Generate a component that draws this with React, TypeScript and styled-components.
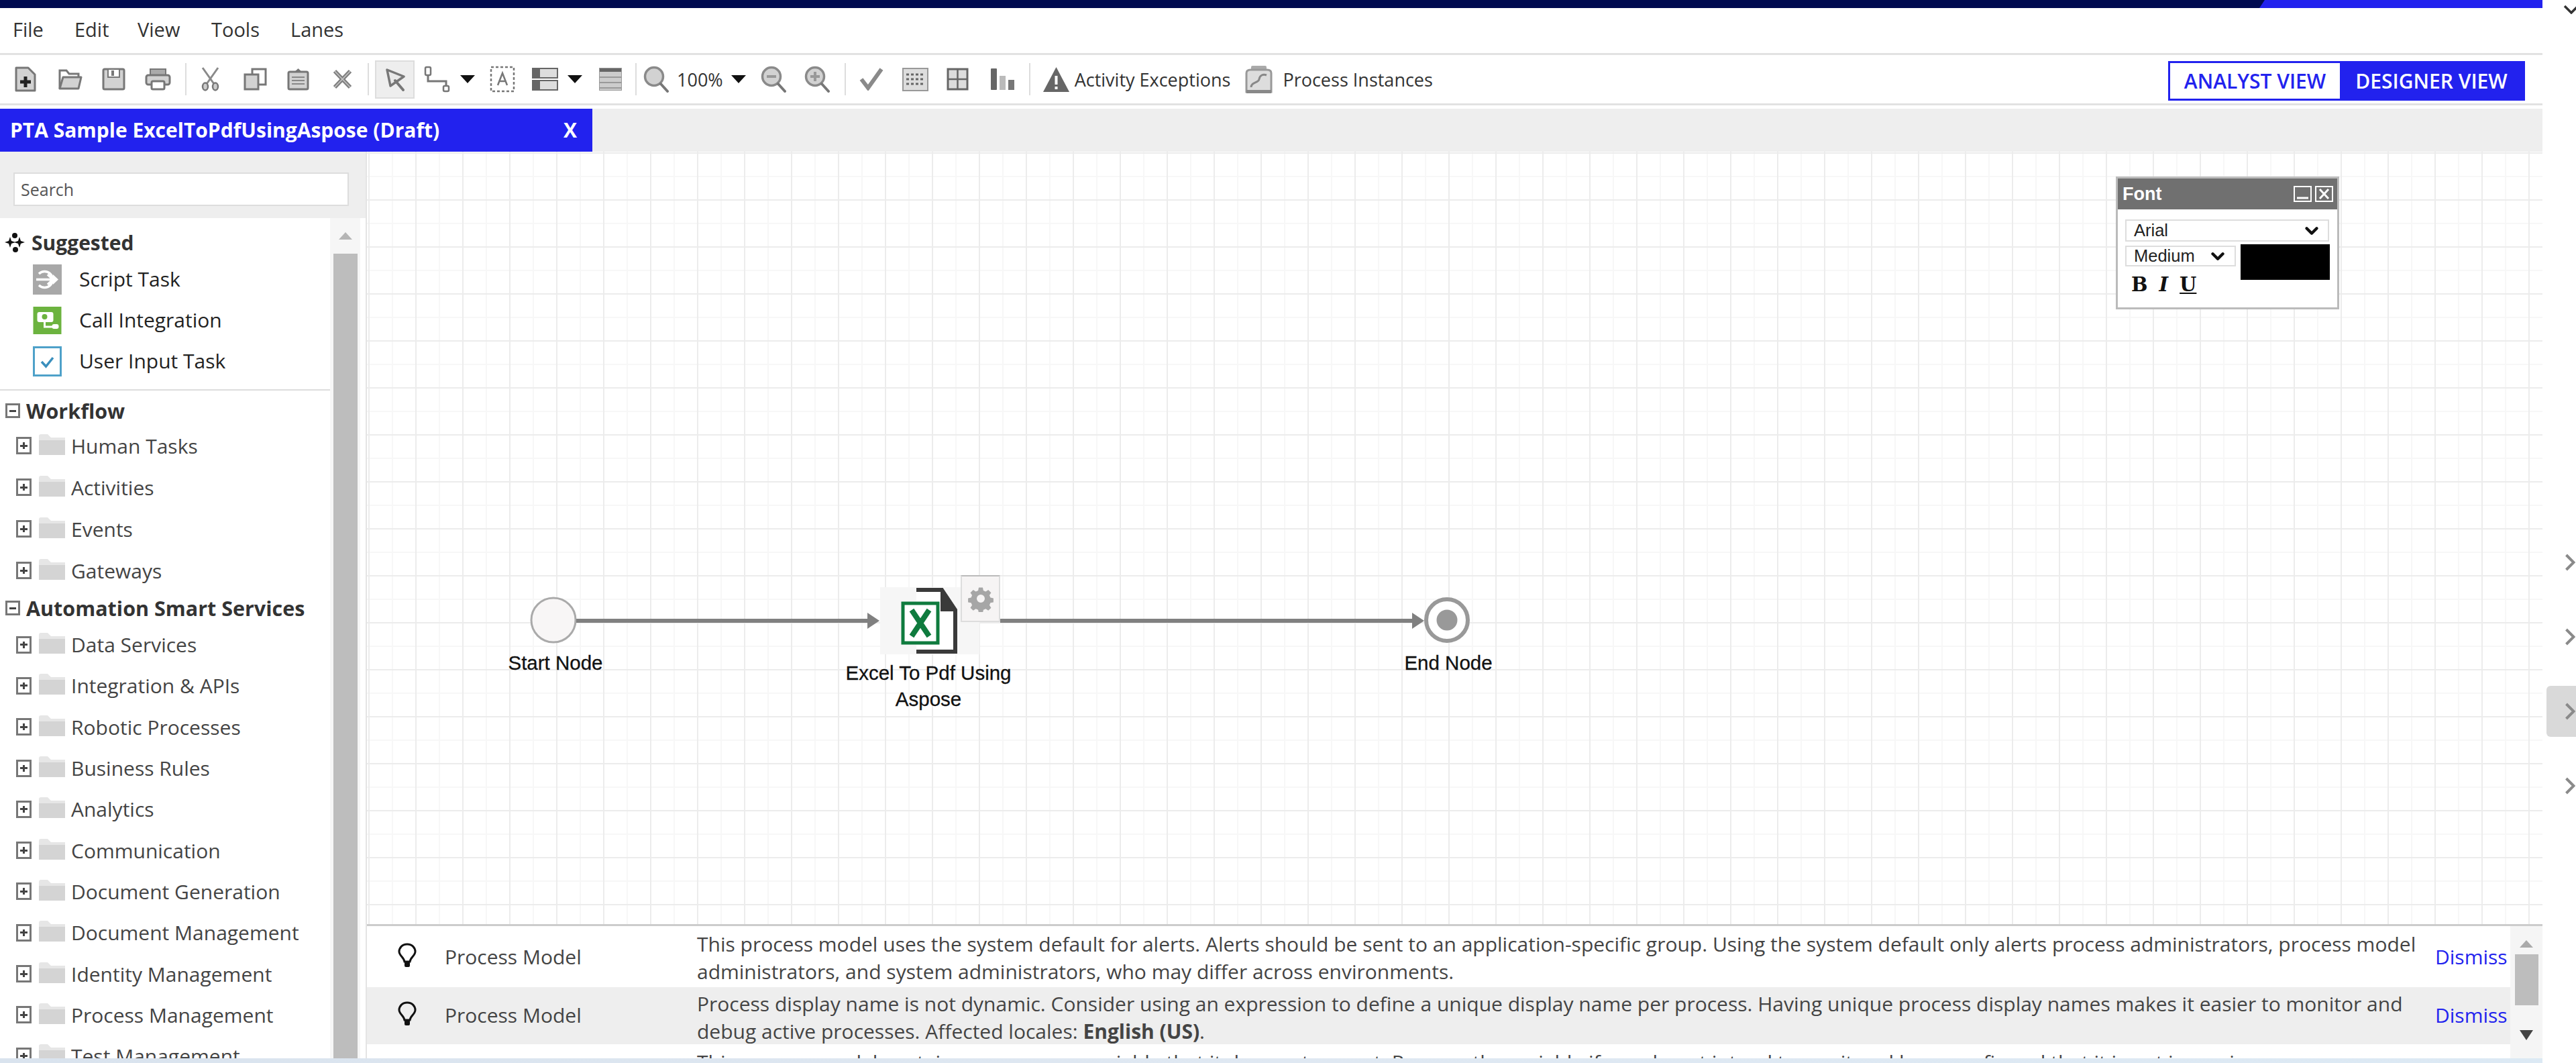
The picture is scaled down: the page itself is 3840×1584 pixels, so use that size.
import React from "react";
import styled, { createGlobalStyle } from "styled-components";
import { ChevronDown } from "lucide-react";

const BLUE = "#2222ee";
const NAVY = "#000a50";
const ICON_LINE = "#777";
const ICON_FILL = "#d2d2d2";

const GlobalStyle = createGlobalStyle`
  html, body {
    margin: 0;
    padding: 0;
    background: #fff;
  }
  body {
    font-family: "Open Sans", "Liberation Sans", sans-serif;
    color: #333;
  }
  * {
    box-sizing: border-box;
  }
`;

const NewIcon = () => (
  <svg width="32" height="38" viewBox="0 0 32 38">
    <path d="M2 2H20L30 12V36H2Z" fill={ICON_FILL} stroke={ICON_LINE} strokeWidth="3" strokeLinejoin="round" />
    <path d="M16 15V31M8 23H24" stroke="#222" strokeWidth="5" />
  </svg>
);

const FolderIcon = () => (
  <svg width="37" height="32" viewBox="0 0 37 32">
    <path d="M3 30V3H13L17 8H31V13" fill="none" stroke={ICON_LINE} strokeWidth="3" />
    <path d="M3 30L8 13H35L31 30Z" fill={ICON_FILL} stroke={ICON_LINE} strokeWidth="3" strokeLinejoin="round" />
  </svg>
);

const SaveIcon = () => (
  <svg width="35" height="34" viewBox="0 0 35 34">
    <rect x="2" y="2" width="31" height="30" rx="2" fill={ICON_FILL} stroke={ICON_LINE} strokeWidth="3" />
    <rect x="9" y="2" width="17" height="12" fill="#fff" stroke={ICON_LINE} strokeWidth="2" />
    <rect x="14" y="4" width="4" height="8" fill={ICON_LINE} />
  </svg>
);

const PrintIcon = () => (
  <svg width="39" height="34" viewBox="0 0 39 34">
    <rect x="8" y="2" width="23" height="9" fill="#aaa" stroke={ICON_LINE} strokeWidth="2" />
    <rect x="2" y="11" width="35" height="14" rx="3" fill={ICON_FILL} stroke={ICON_LINE} strokeWidth="3" />
    <rect x="10" y="20" width="19" height="12" rx="2" fill="#fff" stroke={ICON_LINE} strokeWidth="3" />
  </svg>
);

const CutIcon = () => (
  <svg width="29" height="36" viewBox="0 0 29 36">
    <path d="M3 1L20 25M26 1L9 25" stroke="#8a8a8a" strokeWidth="3" fill="none" />
    <ellipse cx="7" cy="29" rx="4" ry="5.5" fill="#ccc" stroke={ICON_LINE} strokeWidth="2.5" />
    <ellipse cx="22" cy="29" rx="4" ry="5.5" fill="#ccc" stroke={ICON_LINE} strokeWidth="2.5" />
  </svg>
);

const CopyIcon = () => (
  <svg width="35" height="34" viewBox="0 0 35 34">
    <rect x="13" y="2" width="20" height="23" fill="#fff" stroke={ICON_LINE} strokeWidth="3" />
    <rect x="2" y="10" width="20" height="22" fill={ICON_FILL} stroke={ICON_LINE} strokeWidth="3" />
  </svg>
);

const PasteIcon = () => (
  <svg width="33" height="34" viewBox="0 0 33 34">
    <rect x="2" y="6" width="29" height="26" rx="2" fill={ICON_FILL} stroke={ICON_LINE} strokeWidth="3" />
    <path d="M10 7L16.5 1L23 7Z" fill={ICON_LINE} />
    <path d="M7 14H26M7 19H26M7 24H26" stroke="#888" strokeWidth="2" />
  </svg>
);

const DeleteIcon = () => (
  <svg width="31" height="32" viewBox="0 0 31 32">
    <path d="M4 4L27 28M27 4L4 28" stroke="#808080" strokeWidth="6" />
    <path d="M4 4L27 28M27 4L4 28" stroke="#c4c4c4" strokeWidth="1.5" />
  </svg>
);

const PointerIcon = () => (
  <svg width="30" height="36" viewBox="0 0 30 36">
    <path d="M3 4L28 14L8 28Z" fill="#e8e8e8" stroke={ICON_LINE} strokeWidth="3.500" strokeLinejoin="round" />
    <path d="M15 20L27 34" stroke={ICON_LINE} strokeWidth="4" strokeLinecap="round" />
  </svg>
);

const ConnectorIcon = () => (
  <svg width="39" height="40" viewBox="0 0 39 40">
    <rect x="2" y="2" width="8" height="12" rx="2" fill="#fff" stroke={ICON_LINE} strokeWidth="2.5" />
    <path d="M6 14V23H33V30" fill="none" stroke={ICON_LINE} strokeWidth="3" />
    <rect x="29" y="30" width="8" height="8" rx="2" fill="#fff" stroke={ICON_LINE} strokeWidth="2.5" />
  </svg>
);

const TextBoxIcon = () => (
  <svg width="38" height="40" viewBox="0 0 38 40">
    <rect x="2" y="2" width="34" height="36" fill="#fff" stroke={ICON_LINE} strokeWidth="2.5" strokeDasharray="4 3" />
    <path d="M12 29L19 11L26 29M14.5 23H23.5" fill="none" stroke={ICON_LINE} strokeWidth="2.5" />
  </svg>
);

const LanesIcon = () => (
  <svg width="39" height="34" viewBox="0 0 39 34">
    <rect x="1" y="1" width="37" height="14" fill="#ddd" stroke="#666" strokeWidth="2" />
    <rect x="1" y="19" width="37" height="14" fill="#ddd" stroke="#666" strokeWidth="2" />
    <rect x="1" y="1" width="11" height="14" fill="#666" />
    <rect x="1" y="19" width="11" height="14" fill="#666" />
  </svg>
);

const RowsIcon = () => (
  <svg width="34" height="34" viewBox="0 0 34 34">
    <rect x="0" y="0" width="34" height="34" fill="#ccc" />
    <rect x="0" y="0" width="34" height="6" fill="#666" />
    <path d="M0 14H34M0 22H34M0 30H34" stroke="#999" strokeWidth="2" />
    <rect x="0" y="0" width="34" height="34" fill="none" stroke="#999" strokeWidth="2" />
  </svg>
);

const MagnifierIcon = ({ mark }: { mark?: "plus" | "minus" }) => (
  <svg width="39" height="40" viewBox="0 0 39 40">
    <circle cx="16" cy="16" r="13.5" fill={ICON_FILL} stroke="#8a8a8a" strokeWidth="3.5" />
    <path d="M26 27L36 38" stroke={ICON_LINE} strokeWidth="4" strokeLinecap="round" />
    {mark && <path d="M9 16H23" stroke="#999" strokeWidth="4" />}
    {mark === "plus" && <path d="M16 9V23" stroke="#999" strokeWidth="4" />}
  </svg>
);

const CheckIcon = () => (
  <svg width="36" height="34" viewBox="0 0 36 34">
    <path d="M3 17L13 30L33 2" fill="none" stroke="#8a8a8a" strokeWidth="6" />
  </svg>
);

const DenseGridIcon = () => (
  <svg width="39" height="35" viewBox="0 0 39 35">
    <rect x="1" y="1" width="37" height="33" fill="#ddd" stroke="#999" strokeWidth="2" />
    <path d="M6 10H33M6 17H33M6 24H33" stroke="#666" strokeWidth="3" strokeDasharray="4 3" />
  </svg>
);

const GridIcon = () => (
  <svg width="33" height="34" viewBox="0 0 33 34">
    <rect x="2" y="2" width="29" height="30" fill="#ddd" stroke="#666" strokeWidth="3" />
    <path d="M16.5 2V32M2 17H31" stroke="#666" strokeWidth="2.5" />
  </svg>
);

const BarsIcon = () => (
  <svg width="35" height="32" viewBox="0 0 35 32">
    <rect x="0" y="0" width="9" height="32" rx="1" fill="#666" />
    <rect x="13" y="11" width="9" height="21" fill="#bbb" />
    <rect x="26" y="17" width="9" height="15" fill="#777" />
  </svg>
);

const WarningIcon = () => (
  <svg width="41" height="39" viewBox="0 0 41 39">
    <path d="M20.5 1L40 38H1Z" fill="#666" />
    <rect x="18.5" y="14" width="4" height="13" fill="#fff" />
    <rect x="18.5" y="30" width="4" height="4" fill="#fff" />
  </svg>
);

const InstancesIcon = () => (
  <svg width="41" height="43" viewBox="0 0 41 43">
    <rect x="9" y="1" width="23" height="8" rx="2" fill="#aaa" />
    <path d="M2 12Q2 7 8 7H33Q39 7 39 12V40H2Z" fill="#ddd" stroke="#999" strokeWidth="3" />
    <path d="M9 33C9 25 20 27 21 21S27 13 32 15" fill="none" stroke="#888" strokeWidth="3" />
    <rect x="2" y="37" width="37" height="5" fill="#888" />
  </svg>
);

const SparkIcon = () => (
  <svg width="30" height="31" viewBox="0 0 30 31">
    <path d="M8 7L10 13L16 15L10 17L8 23L6 17L0 15L6 13Z" fill="#111" />
    <path d="M22 7L24 13L30 15L24 17L22 23L20 17L14 15L20 13Z" fill="#111" />
    <circle cx="15" cy="5" r="4" fill="#111" />
    <circle cx="16" cy="26" r="4" fill="#111" />
  </svg>
);

const ScriptTaskIcon = () => (
  <svg width="43" height="45" viewBox="0 0 43 45">
    <rect width="43" height="45" fill="#a8a8a8" />
    <path d="M9 14A12 12 0 1 1 9 31" fill="none" stroke="#fff" strokeWidth="3.5" />
    <path d="M5 22.5H28M22 15L30 22.5L22 30" fill="none" stroke="#fff" strokeWidth="3.5" />
    <path d="M30 15L38 22.5L30 30Z" fill="#fff" />
  </svg>
);

const IntegrationIcon = () => (
  <svg width="42" height="41" viewBox="0 0 42 41">
    <rect width="42" height="41" fill="#6cb33f" />
    <rect x="6" y="8" width="24" height="15" rx="3" fill="#fff" />
    <circle cx="17" cy="15" r="4" fill="#6cb33f" />
    <path d="M17 20V30H30" fill="none" stroke="#fff" strokeWidth="3" />
    <rect x="28" y="26" width="10" height="7" rx="3" fill="#fff" />
  </svg>
);

const UserTaskIcon = () => (
  <svg width="43" height="45" viewBox="0 0 43 45">
    <rect x="1.5" y="1.5" width="40" height="42" fill="#fff" stroke="#4ea1c9" strokeWidth="3" />
    <path d="M13 23L19.5 30L30 17" fill="none" stroke="#3a8fbd" strokeWidth="3.5" />
  </svg>
);

const BulbIcon = () => (
  <svg width="30" height="37" viewBox="0 0 30 37">
    <path d="M15 2C7 2 3 8 3 13C3 19 10 21 11 28H19C20 21 27 19 27 13C27 8 23 2 15 2Z" fill="none" stroke="#111" strokeWidth="3" />
    <rect x="11" y="28" width="8" height="8" rx="2" fill="#111" />
  </svg>
);

const GrayFolder = () => (
  <svg width="39" height="31" viewBox="0 0 39 31">
    <path d="M0 3Q0 0 3 0H13L18 5H39V9H0Z" fill="#e6e6e6" />
    <rect x="0" y="9" width="39" height="22" fill="#d4d4d4" />
  </svg>
);

const ExcelIcon = () => (
  <svg width="100" height="100" viewBox="0 0 100 100">
    <path d="M30 4H68L88 34V96H30" fill="#fff" stroke="#3a3a3a" strokeWidth="6" />
    <path d="M66 3L90 36H66Z" fill="#3a3a3a" />
    <rect x="10" y="24" width="52" height="59" fill="#fff" stroke="#0f7b3e" strokeWidth="5" />
    <path d="M23 34L49 73M49 34L23 73" stroke="#0f7b3e" strokeWidth="8" />
  </svg>
);

const GearIcon = () => (
  <svg width="40" height="40" viewBox="0 0 24 24">
    <path
      d="M10 1h4l.6 3 2.3 1 2.6-1.700 2.800 2.800-1.700 2.600 1 2.300 3 .6v4l-3 .6-1 2.300 1.700 2.600-2.800 2.800-2.600-1.700-2.300 1-.6 3h-4l-.6-3-2.300-1-2.600 1.700-2.800-2.800 1.700-2.600-1-2.300-3-.6v-4l3-.6 1-2.300-1.700-2.600 2.800-2.800 2.600 1.700 2.300-1zM12 8a4 4 0 1 0 0 8a4 4 0 0 0 0-8z"
      fill="#a6a6a6"
      fillRule="evenodd"
      transform="translate(1.200 1.200) scale(.9)"
    />
  </svg>
);

const SmallMinimize = () => (
  <svg width="27" height="24" viewBox="0 0 27 24">
    <rect x="1" y="1" width="25" height="22" fill="none" stroke="#fff" strokeWidth="2" />
    <path d="M5 18H22" stroke="#fff" strokeWidth="3" />
  </svg>
);

const SmallClose = () => (
  <svg width="27" height="24" viewBox="0 0 27 24">
    <rect x="1" y="1" width="25" height="22" fill="none" stroke="#fff" strokeWidth="2" />
    <path d="M7 5L20 19M20 5L7 19" stroke="#fff" strokeWidth="3" />
  </svg>
);

const RailChevron = () => (
  <svg width="16" height="26" viewBox="0 0 16 26">
    <path d="M2.500 2L13.500 13L2.500 24" fill="none" stroke="#8a8a8a" strokeWidth="4" />
  </svg>
);

const CornerChevron = () => (
  <svg width="24" height="14" viewBox="0 0 24 14">
    <path d="M2 2L12 12L22 2" fill="none" stroke="#333" strokeWidth="3.500" />
  </svg>
);

const TriangleDown = styled.span`
  display: block;
  width: 0;
  height: 0;
  border-left: 11.5px solid transparent;
  border-right: 11.5px solid transparent;
  border-top: 12px solid #111;
`;

const Tool = styled.div<{ $ml: number }>`
  display: flex;
  align-items: center;
  flex-shrink: 0;
  margin-left: ${(props) => props.$ml}px;
  svg {
    display: block;
    filter: blur(0.5px);
  }
`;

const Separator = styled.div<{ $ml: number }>`
  width: 2px;
  height: 48px;
  flex-shrink: 0;
  margin-left: ${(props) => props.$ml}px;
  background: #ddd;
`;

const SelectedTool = styled(Tool)`
  width: 59px;
  height: 57px;
  justify-content: center;
  background: #eee;
  border: 2px solid #ddd;
`;

const ToolLabel = styled.span<{ $ml: number }>`
  margin-left: ${(props) => props.$ml}px;
  font-size: 27px;
  white-space: nowrap;
  color: #333;
`;

const Page = styled.div`
  display: flex;
  width: 3840px;
  height: 1584px;
  overflow: hidden;
`;

const MainColumn = styled.div`
  display: flex;
  flex-direction: column;
  width: 3790px;
  height: 100%;
`;

const TopBar = styled.div`
  display: flex;
  justify-content: flex-end;
  height: 12px;
  flex-shrink: 0;
  background: ${NAVY};
`;

const TopBarAccent = styled.div`
  width: 422px;
  background: ${BLUE};
  clip-path: polygon(8px 0, 100% 0, 100% 100%, 0 100%);
`;

const MenuBar = styled.nav`
  display: flex;
  align-items: center;
  height: 70px;
  flex-shrink: 0;
  padding-left: 19px;
  border-bottom: 3px solid #e2e2e2;
`;

const MenuItem = styled.span<{ $w: number }>`
  width: ${(props) => props.$w}px;
  font-size: 29px;
  color: #333;
  margin-top: -5px;
`;

const Toolbar = styled.div`
  display: flex;
  align-items: center;
  height: 75px;
  flex-shrink: 0;
  padding-right: 26px;
  border-bottom: 3px solid #e2e2e2;
`;

const ViewSwitch = styled.div`
  display: flex;
  margin-left: auto;
  margin-top: 5px;
  height: 59px;
  border: 3px solid ${BLUE};
`;

const ViewButton = styled.div<{ $active?: boolean; $w: number }>`
  display: flex;
  align-items: center;
  justify-content: center;
  width: ${(props) => props.$w}px;
  font-size: 30px;
  font-weight: 600;
  white-space: nowrap;
  color: ${(props) => (props.$active ? "#fff" : BLUE)};
  background: ${(props) => (props.$active ? BLUE : "#fff")};
`;

const TabRow = styled.div`
  display: flex;
  height: 64px;
  flex-shrink: 0;
  margin-top: 5px;
  background: #eee;
`;

const Tab = styled.div`
  display: flex;
  align-items: center;
  justify-content: space-between;
  width: 883px;
  padding: 0 23px 2px 15px;
  background: ${BLUE};
  color: #fff;
  font-size: 30px;
  font-weight: 700;
  white-space: nowrap;
`;

const Workspace = styled.div`
  display: flex;
  flex: 1;
  min-height: 0;
`;

const Sidebar = styled.aside`
  display: flex;
  flex-direction: column;
  width: 547px;
  flex-shrink: 0;
  border-right: 2px solid #e4e4e4;
`;

const SearchArea = styled.div`
  height: 99px;
  flex-shrink: 0;
  padding: 31px 25px 0 20px;
  background: #eee;
`;

const SearchBox = styled.div`
  display: flex;
  align-items: center;
  height: 50px;
  padding-left: 9px;
  background: #fff;
  border: 2px solid #ddd;
  color: #555;
  font-size: 25px;
`;

const PaletteWrap = styled.div`
  display: flex;
  flex: 1;
  min-height: 0;
`;

const Palette = styled.div`
  width: 492px;
  flex-shrink: 0;
  overflow: hidden;
`;

const SuggestedHead = styled.div`
  display: flex;
  align-items: center;
  gap: 10px;
  height: 61px;
  padding: 12px 0 0 7px;
  font-size: 30px;
  font-weight: 700;
  color: #333;
`;

const SuggestedList = styled.div`
  padding: 0 0 11px 49px;
  border-bottom: 2px solid #ddd;
`;

const SuggestedItem = styled.div`
  display: flex;
  align-items: center;
  height: 61px;
  padding-bottom: 3px;
  font-size: 30px;
  color: #222;
  svg {
    width: 43px;
    flex-shrink: 0;
    margin: 3px 26px 0 0;
  }
`;

const SectionHead = styled.div<{ $mt: number }>`
  display: flex;
  align-items: center;
  gap: 9px;
  height: 40px;
  margin-top: ${(props) => props.$mt}px;
  padding-left: 8px;
  font-size: 30.500px;
  font-weight: 700;
  color: #333;
  white-space: nowrap;
`;

const TreeBox = styled.span<{ $w: number; $h: number }>`
  position: relative;
  display: block;
  flex-shrink: 0;
  width: ${(props) => props.$w}px;
  height: ${(props) => props.$h}px;
  border: 3px solid #777;
  background: #fff;
  &::before {
    content: "";
    position: absolute;
    left: 3px;
    right: 3px;
    top: 50%;
    height: 3px;
    margin-top: -1.500px;
    background: #444;
  }
`;

const PlusBox = styled(TreeBox)`
  &::after {
    content: "";
    position: absolute;
    top: 5px;
    bottom: 5px;
    left: 50%;
    width: 3px;
    margin-left: -1.500px;
    background: #444;
  }
`;

const TreeGroup = styled.div<{ $mt: number }>`
  margin-top: ${(props) => props.$mt}px;
`;

const TreeRow = styled.div<{ $h: number }>`
  display: flex;
  align-items: center;
  height: ${(props) => props.$h}px;
  padding-left: 24px;
  font-size: 30px;
  color: #444;
  white-space: nowrap;
  svg {
    display: block;
    flex-shrink: 0;
    margin: -4px 9px 0 11px;
  }
`;

const Scrollbar = styled.div`
  display: flex;
  flex-direction: column;
  align-items: center;
  width: 45px;
  flex-shrink: 0;
  background: #f6f6f6;
`;

const ArrowUp = styled.span<{ $color: string }>`
  display: block;
  width: 0;
  height: 0;
  flex-shrink: 0;
  border-left: 10px solid transparent;
  border-right: 10px solid transparent;
  border-bottom: 11px solid ${(props) => props.$color};
`;

const ArrowDown = styled.span`
  display: block;
  width: 0;
  height: 0;
  flex-shrink: 0;
  border-left: 10px solid transparent;
  border-right: 10px solid transparent;
  border-top: 15px solid #444;
`;

const SidebarArrowBox = styled.div`
  display: flex;
  align-items: center;
  justify-content: center;
  height: 53px;
  flex-shrink: 0;
`;

const SidebarThumb = styled.div`
  width: 36px;
  flex: 1;
  background: #bdbdbd;
`;

const CanvasColumn = styled.div`
  display: flex;
  flex-direction: column;
  flex: 1;
  min-width: 0;
`;

const Canvas = styled.div`
  position: relative;
  flex: 1;
  min-height: 0;
  overflow: hidden;
  background-color: #fff;
  background-image:
    linear-gradient(to right, #ececec 0, #ececec 2px, transparent 2px),
    linear-gradient(to bottom, #ececec 0, #ececec 2px, transparent 2px),
    linear-gradient(to right, #f7f7f7 0, #f7f7f7 2px, transparent 2px),
    linear-gradient(to bottom, #f7f7f7 0, #f7f7f7 2px, transparent 2px);
  background-size: 70px 70px, 70px 70px, 35px 35px, 35px 35px;
  background-position: 2px 1px;
`;

const DiagramLines = styled.svg`
  position: absolute;
  left: 0;
  top: 0;
`;

const NodeLabel = styled.div<{ $x: number; $y: number }>`
  position: absolute;
  left: ${(props) => props.$x}px;
  top: ${(props) => props.$y}px;
  width: 300px;
  margin-left: -150px;
  font-family: "Liberation Sans", Arial, sans-serif;
  font-size: 29.500px;
  line-height: 39px;
  text-align: center;
  color: #111;
  -webkit-text-stroke: 0.3px #111;
`;

const TaskTile = styled.div`
  position: absolute;
  left: 765px;
  top: 649px;
  display: flex;
  align-items: center;
  justify-content: center;
  width: 148px;
  height: 100px;
  background: #f6f6f6;
`;

const GearTile = styled.div`
  position: absolute;
  left: 885px;
  top: 631px;
  display: flex;
  align-items: center;
  justify-content: center;
  width: 59px;
  height: 70px;
  background: #f6f4f4;
  border: 2px solid #ddd;
  border-top-color: #bbb;
`;

const FontPanel = styled.div`
  position: absolute;
  left: 2607px;
  top: 37px;
  width: 333px;
  height: 198px;
  background: #fff;
  border: 3px solid #bbb;
  font-family: "Liberation Sans", Arial, sans-serif;
`;

const FontHeader = styled.div`
  display: flex;
  align-items: center;
  gap: 5px;
  height: 46px;
  padding: 0 6px 0 7px;
  background: #707070;
  color: #fff;
  font-size: 27px;
  font-weight: 700;
  span {
    margin-right: auto;
  }
`;

const FontBody = styled.div`
  display: grid;
  grid-template-columns: 165px 133px;
  grid-template-rows: 33px 6px 31px auto;
  column-gap: 7px;
  padding: 15px 0 0 11px;
`;

const FontSelect = styled.div<{ $wide?: boolean }>`
  display: flex;
  align-items: center;
  justify-content: space-between;
  grid-column: ${(props) => (props.$wide ? "1 / 3" : "1")};
  grid-row: ${(props) => (props.$wide ? "1" : "3")};
  padding: 0 ${(props) => (props.$wide ? 9 : 10)}px 0 11px;
  border: 2px solid #ddd;
  font-size: 25.500px;
  color: #222;
  width: ${(props) => (props.$wide ? "304px" : "auto")};
`;

const ColorSwatch = styled.div`
  grid-column: 2;
  grid-row: 2 / 5;
  height: 53px;
  margin-top: 4px;
  background: #000;
`;

const StyleButtons = styled.div`
  grid-column: 1;
  grid-row: 4;
  display: flex;
  gap: 17px;
  padding: 9px 0 0 9px;
  font-family: "DejaVu Serif", "Liberation Serif", serif;
  font-size: 29px;
  font-weight: 700;
  line-height: 36px;
  color: #111;
  b:nth-child(2) {
    font-style: italic;
  }
  b:nth-child(3) {
    text-decoration: underline;
  }
`;

const AlertPanel = styled.div`
  display: flex;
  height: 200px;
  flex-shrink: 0;
  border-top: 3px solid #ccc;
`;

const AlertList = styled.div`
  flex: 1;
  min-width: 0;
  overflow: hidden;
`;

const AlertRow = styled.div<{ $shaded?: boolean; $h: number; $pt: number }>`
  display: flex;
  align-items: flex-start;
  height: ${(props) => props.$h}px;
  padding-top: ${(props) => props.$pt}px;
  background: ${(props) => (props.$shaded ? "#eee" : "#fff")};
  font-size: 30px;
  color: #444;
  white-space: nowrap;
`;

const AlertSide = styled.div`
  display: flex;
  align-items: center;
  align-self: center;
  width: 492px;
  flex-shrink: 0;
  padding-left: 45px;
  margin-top: -6px;
  svg {
    flex-shrink: 0;
    margin: -4px 41px 0 0;
  }
`;

const AlertText = styled.div`
  width: 2591px;
  flex-shrink: 0;
  line-height: 41px;
  b {
    font-weight: 700;
  }
`;

const Dismiss = styled.span`
  align-self: center;
  margin-top: -6px;
  color: ${BLUE};
`;

const AlertScroll = styled.div`
  display: flex;
  flex-direction: column;
  align-items: center;
  width: 48px;
  flex-shrink: 0;
  background: #f5f5f5;
  padding-top: 21px;
`;

const AlertThumb = styled.div`
  width: 35px;
  height: 76px;
  margin: 10px 0 37px;
  background: #bdbdbd;
`;

const TaskStrip = styled.div`
  height: 7px;
  flex-shrink: 0;
  background: linear-gradient(to right, #d9e3ee, #dfe8f2 50%, #dce9f4);
`;

const RightRail = styled.div`
  display: flex;
  flex-direction: column;
  align-items: flex-end;
  flex: 1;
`;

const TopChevron = styled.div`
  display: flex;
  justify-content: flex-end;
  width: 100%;
  height: 28px;
  padding-top: 7px;
  margin-bottom: 772px;
  svg {
    flex-shrink: 0;
    margin-right: -5px;
  }
`;

const RailButton = styled.div<{ $active?: boolean }>`
  display: flex;
  align-items: center;
  justify-content: flex-end;
  width: 44px;
  height: 76px;
  margin-bottom: 35px;
  padding-right: 1px;
  background: ${(props) => (props.$active ? "#d9d9d9" : "transparent")};
  border-radius: 6px 0 0 6px;
`;

const workflowItems = ["Human Tasks", "Activities", "Events", "Gateways"];

const smartServiceItems = [
  "Data Services",
  "Integration & APIs",
  "Robotic Processes",
  "Business Rules",
  "Analytics",
  "Communication",
  "Document Generation",
  "Document Management",
  "Identity Management",
  "Process Management",
  "Test Management",
];

function App(): React.ReactElement {
  return (
    <Page>
      <GlobalStyle />
      <MainColumn>
        <TopBar>
          <TopBarAccent />
        </TopBar>
        <MenuBar>
          <MenuItem $w={92}>File</MenuItem>
          <MenuItem $w={94}>Edit</MenuItem>
          <MenuItem $w={110}>View</MenuItem>
          <MenuItem $w={118}>Tools</MenuItem>
          <MenuItem $w={90}>Lanes</MenuItem>
        </MenuBar>
        <Toolbar>
          <Tool $ml={22}><NewIcon /></Tool>
          <Tool $ml={32}><FolderIcon /></Tool>
          <Tool $ml={29}><SaveIcon /></Tool>
          <Tool $ml={29}><PrintIcon /></Tool>
          <Separator $ml={21} />
          <Tool $ml={21}><CutIcon /></Tool>
          <Tool $ml={35}><CopyIcon /></Tool>
          <Tool $ml={30}><PasteIcon /></Tool>
          <Tool $ml={34}><DeleteIcon /></Tool>
          <Separator $ml={22} />
          <SelectedTool $ml={9}><PointerIcon /></SelectedTool>
          <Tool $ml={14}><ConnectorIcon /></Tool>
          <Tool $ml={15}><TriangleDown /></Tool>
          <Tool $ml={22}><TextBoxIcon /></Tool>
          <Tool $ml={25}><LanesIcon /></Tool>
          <Tool $ml={14}><TriangleDown /></Tool>
          <Tool $ml={25}><RowsIcon /></Tool>
          <Separator $ml={20} />
          <Tool $ml={10}><MagnifierIcon /></Tool>
          <ToolLabel $ml={11}>100%</ToolLabel>
          <Tool $ml={12}><TriangleDown /></Tool>
          <Tool $ml={22}><MagnifierIcon mark="minus" /></Tool>
          <Tool $ml={26}><MagnifierIcon mark="plus" /></Tool>
          <Separator $ml={21} />
          <Tool $ml={20}><CheckIcon /></Tool>
          <Tool $ml={28}><DenseGridIcon /></Tool>
          <Tool $ml={27}><GridIcon /></Tool>
          <Tool $ml={33}><BarsIcon /></Tool>
          <Separator $ml={22} />
          <Tool $ml={18}><WarningIcon /></Tool>
          <ToolLabel $ml={7}>Activity Exceptions</ToolLabel>
          <Tool $ml={22}><InstancesIcon /></Tool>
          <ToolLabel $ml={15}>Process Instances</ToolLabel>
          <ViewSwitch>
            <ViewButton $w={253}>ANALYST VIEW</ViewButton>
            <ViewButton $active $w={273}>DESIGNER VIEW</ViewButton>
          </ViewSwitch>
        </Toolbar>
        <TabRow>
          <Tab>
            PTA Sample ExcelToPdfUsingAspose (Draft)
            <span>X</span>
          </Tab>
        </TabRow>
        <Workspace>
          <Sidebar>
            <SearchArea>
              <SearchBox>Search</SearchBox>
            </SearchArea>
            <PaletteWrap>
              <Palette>
                <SuggestedHead>
                  <SparkIcon />
                  Suggested
                </SuggestedHead>
                <SuggestedList>
                  <SuggestedItem><ScriptTaskIcon />Script Task</SuggestedItem>
                  <SuggestedItem><IntegrationIcon />Call Integration</SuggestedItem>
                  <SuggestedItem><UserTaskIcon />User Input Task</SuggestedItem>
                </SuggestedList>
                <SectionHead $mt={10}>
                  <TreeBox $w={22} $h={22} />
                  Workflow
                </SectionHead>
                <TreeGroup $mt={1}>
                  {workflowItems.map((item) => (
                    <TreeRow key={item} $h={62}>
                      <PlusBox $w={23} $h={26} />
                      <GrayFolder />
                      {item}
                    </TreeRow>
                  ))}
                </TreeGroup>
                <SectionHead $mt={5}>
                  <TreeBox $w={22} $h={22} />
                  Automation Smart Services
                </SectionHead>
                <TreeGroup $mt={4}>
                  {smartServiceItems.map((item) => (
                    <TreeRow key={item} $h={61.3}>
                      <PlusBox $w={23} $h={26} />
                      <GrayFolder />
                      {item}
                    </TreeRow>
                  ))}
                </TreeGroup>
              </Palette>
              <Scrollbar>
                <SidebarArrowBox>
                  <ArrowUp $color="#b5b5b5" />
                </SidebarArrowBox>
                <SidebarThumb />
              </Scrollbar>
            </PaletteWrap>
          </Sidebar>
          <CanvasColumn>
            <Canvas>
              <DiagramLines width="3241" height="1151">
                <circle cx="278" cy="698" r="33" fill="#f8f6f6" stroke="#aaa" strokeWidth="3" />
                <path d="M312 699H746" stroke="#808080" strokeWidth="6" />
                <path d="M746 687L764 699L746 711Z" fill="#808080" />
                <path d="M944 699H1560" stroke="#808080" strokeWidth="6" />
                <path d="M1558 687L1576 699L1558 711Z" fill="#808080" />
                <circle cx="1610" cy="698" r="31" fill="#fff" stroke="#999" strokeWidth="6" />
                <circle cx="1610" cy="698" r="15.500" fill="#999" />
              </DiagramLines>
              <NodeLabel $x={281} $y={742}>Start Node</NodeLabel>
              <TaskTile><ExcelIcon /></TaskTile>
              <GearTile><GearIcon /></GearTile>
              <NodeLabel $x={837} $y={757}>
                Excel To Pdf Using
                <br />
                Aspose
              </NodeLabel>
              <NodeLabel $x={1612} $y={742}>End Node</NodeLabel>
              <FontPanel>
                <FontHeader>
                  <span>Font</span>
                  <SmallMinimize />
                  <SmallClose />
                </FontHeader>
                <FontBody>
                  <FontSelect $wide>
                    Arial
                    <ChevronDown size={30} strokeWidth={3.5} color="#111" />
                  </FontSelect>
                  <FontSelect>
                    Medium
                    <ChevronDown size={30} strokeWidth={3.5} color="#111" />
                  </FontSelect>
                  <ColorSwatch />
                  <StyleButtons>
                    <b>B</b>
                    <b>I</b>
                    <b>U</b>
                  </StyleButtons>
                </FontBody>
              </FontPanel>
            </Canvas>
            <AlertPanel>
              <AlertList>
                <AlertRow $h={91} $pt={6}>
                  <AlertSide>
                    <BulbIcon />
                    Process Model
                  </AlertSide>
                  <AlertText>
                    This process model uses the system default for alerts. Alerts should be sent to an application-specific group. Using the system default only alerts process administrators, process model
                    <br />
                    administrators, and system administrators, who may differ across environments.
                  </AlertText>
                  <Dismiss>Dismiss</Dismiss>
                </AlertRow>
                <AlertRow $shaded $h={85} $pt={4}>
                  <AlertSide>
                    <BulbIcon />
                    Process Model
                  </AlertSide>
                  <AlertText>
                    Process display name is not dynamic. Consider using an expression to define a unique display name per process. Having unique process display names makes it easier to monitor and
                    <br />
                    debug active processes. Affected locales: <b>English (US)</b>.
                  </AlertText>
                  <Dismiss>Dismiss</Dismiss>
                </AlertRow>
                <AlertRow $h={24} $pt={6}>
                  <AlertSide />
                  <AlertText>
                    This process model contains one process variable that it does not use yet. Remove the variable if you do not intend to use it and have confirmed that it is not in use in any process
                  </AlertText>
                </AlertRow>
              </AlertList>
              <AlertScroll>
                <ArrowUp $color="#aaa" />
                <AlertThumb />
                <ArrowDown />
              </AlertScroll>
            </AlertPanel>
          </CanvasColumn>
        </Workspace>
        <TaskStrip />
      </MainColumn>
      <RightRail>
        <TopChevron>
          <CornerChevron />
        </TopChevron>
        <RailButton><RailChevron /></RailButton>
        <RailButton><RailChevron /></RailButton>
        <RailButton $active><RailChevron /></RailButton>
        <RailButton><RailChevron /></RailButton>
      </RightRail>
    </Page>
  );
}

export default App;
